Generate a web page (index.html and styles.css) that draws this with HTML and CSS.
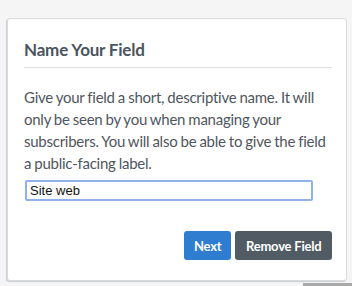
FILE: index.html
```html
<!DOCTYPE html>
<html lang="en">
  <head>
    <meta charset="utf-8">
    <title>Name Your Field</title>
    <link rel="stylesheet" href="styles.css">
  </head>
  <body>
    <div class="modal">
      <h2 class="modal-title">Name Your Field</h2>
      <p class="modal-text">
        Give your field a short, descriptive name. It will only be seen by you when managing your subscribers. You will also be able to give the field a public-facing label.
      </p>
      <input class="field-input" type="text" value="Site web">
      <div class="actions">
        <button class="btn btn-primary">Next</button>
        <button class="btn btn-dark">Remove Field</button>
      </div>
    </div>
    <div class="corner"></div>
  </body>
</html>
```

FILE: styles.css
```css
html, body {
  margin: 0;
  padding: 0;
}
body {
  background: #f5f5f5;
  font-family: Lato, "Noto Sans", Arial, sans-serif;
  color: #4f565e;
  height: 286px;
  overflow: hidden;
  padding: 18px 5px 0 7px;
  box-sizing: border-box;
}
.modal {
  width: 340px;
  height: 263px;
  box-sizing: border-box;
  background: #fff;
  border: 1px solid #d7dadd;
  border-radius: 3px;
  box-shadow: -1px 1px 1px #c9ced3;
  padding: 20px 14px 0 16px;
}
.modal-title {
  margin: 0;
  font-size: 17px;
  font-weight: bold;
  letter-spacing: -0.2px;
  color: #4b5560;
  padding-bottom: 7px;
  border-bottom: 1px solid #dde0e3;
}
.modal-text {
  margin: 18px 0 0 0;
  font-size: 15px;
  letter-spacing: -0.25px;
  word-spacing: -0.5px;
  line-height: 22px;
}
.field-input {
  display: block;
  margin: 6px 0 0 1px;
  width: 288px;
  height: 21px;
  box-sizing: border-box;
  border: 2px solid #8fb2ef;
  border-radius: 2px;
  padding: 0 3px;
  font-family: Arial, "Liberation Sans", sans-serif;
  font-size: 13px;
  color: #111;
  outline: none;
}
.actions {
  display: flex;
  justify-content: flex-end;
  gap: 4px;
  margin-top: 30px;
}
.btn {
  border: none;
  border-radius: 3px;
  height: 29px;
  padding: 0 10px;
  font-family: inherit;
  font-size: 13px;
  font-weight: bold;
  letter-spacing: -0.2px;
  color: #fff;
}
.btn-primary {
  background: #2f7dd1;
}
.btn-dark {
  background: #505b64;
  padding: 0 10.5px;
}
.corner {
  position: absolute;
  left: 303px;
  top: 283px;
  width: 49px;
  height: 3px;
  background: #a9a9a9;
}
```
